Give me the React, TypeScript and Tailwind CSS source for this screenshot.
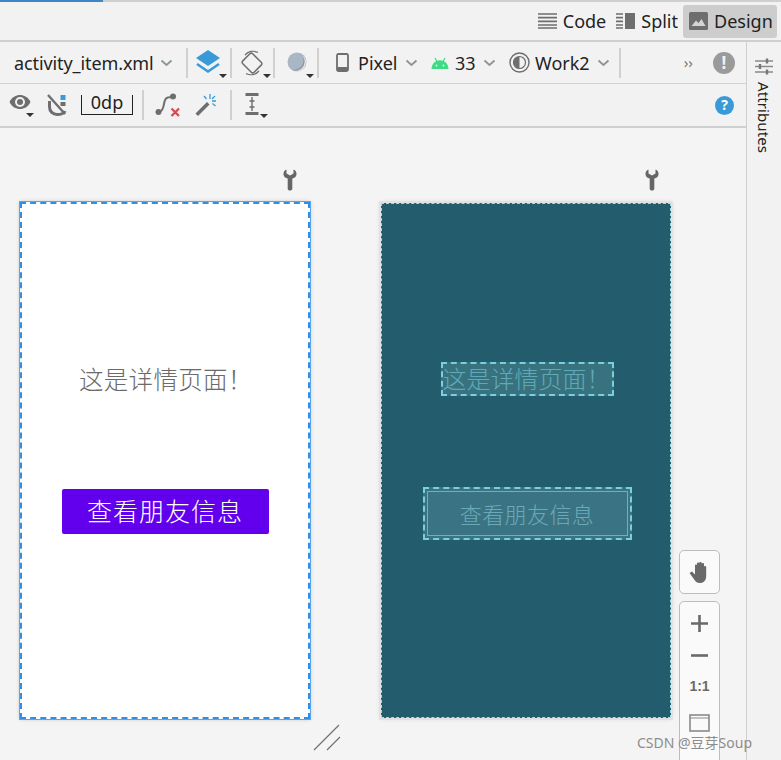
import React from "react";

const F = "[font-family:'Noto_Sans','Noto_Sans_CJK_SC',sans-serif]";

function Chevron() {
  return (
    <svg width="13" height="8" viewBox="0 0 13 8" className="shrink-0">
      <path d="M1.5 1.5 6.5 6 11.5 1.5" fill="none" stroke="#8c9499" strokeWidth="1.8" />
    </svg>
  );
}

function Corner() {
  return <span className="absolute right-0 bottom-0 h-0 w-0 border-x-[4px] border-t-[4px] border-x-transparent border-t-[#333]" />;
}

function Sep() {
  return <div className="h-[30px] w-[2px] shrink-0 bg-[#d0d0d0]" />;
}

function Wrench() {
  return (
    <svg width="14" height="22" viewBox="0 0 14 22">
      <path d="M3.5 0.5 C1.2 1.4 0.3 3.4 0.5 5.4 C0.8 7.6 2.4 9 4.7 9.6 L4.7 19.4 C4.7 20.8 5.7 21.6 7 21.6 C8.3 21.6 9.3 20.8 9.3 19.4 L9.3 9.6 C11.6 9 13.2 7.6 13.5 5.4 C13.7 3.4 12.8 1.4 10.5 0.5 L10.5 4.6 L7 6.4 L3.5 4.6 Z" fill="#666" />
    </svg>
  );
}

function TabIcon({ kind }: { kind: "code" | "split" | "design" }) {
  if (kind === "code")
    return (
      <svg width="19" height="16" viewBox="0 0 19 16">
        <path d="M0 1h19M0 4.7h19M0 8.3h19M0 12h19M0 15h19" stroke="#6e6e6e" strokeWidth="1.7" />
      </svg>
    );
  if (kind === "split")
    return (
      <svg width="19" height="16" viewBox="0 0 19 16">
        <path d="M0 1h7M0 4.7h7M0 8.3h7M0 12h7M0 15h7" stroke="#6e6e6e" strokeWidth="1.7" />
        <rect x="9" y="0" width="10" height="16" fill="#6e6e6e" />
      </svg>
    );
  return (
    <svg width="19" height="18" viewBox="0 0 19 18">
      <rect width="19" height="18" rx="1.5" fill="#6e6e6e" />
      <path d="M2.5 14 7 8.5 9.5 11 12.5 7 16.5 14Z" fill="#d4d4d4" />
    </svg>
  );
}

export default function App() {
  return (
    <div className={`relative flex h-[760px] w-[781px] flex-col overflow-hidden bg-[#f2f2f2] text-[#222] ${F}`}>
      {/* progress */}
      <div className="h-[2px] shrink-0 bg-[#cfcfcf]">
        <div className="h-full w-[103px] bg-[#3d86c6]" />
      </div>

      {/* Code / Split / Design */}
      <div className="flex h-[38px] shrink-0 items-center justify-end pr-[4px] text-[18px] leading-none">
        <div className="flex items-center gap-[6px] pr-[10px]">
          <TabIcon kind="code" />
          <span>Code</span>
        </div>
        <div className="flex items-center gap-[6px] pr-[5px]">
          <TabIcon kind="split" />
          <span>Split</span>
        </div>
        <div className="flex h-[33px] w-[94px] items-center gap-[6px] rounded-[3px] bg-[#cdcdcd] pl-[6px]">
          <TabIcon kind="design" />
          <span>Design</span>
        </div>
      </div>
      <div className="h-[2px] shrink-0 bg-[#cfcfcf]" />

      <div className="flex min-h-0 flex-1">
        <div className="flex min-w-0 flex-1 flex-col">
          {/* Toolbar 1 */}
          <div className="flex h-[42px] shrink-0 items-center border-b border-[#d2d2d2] text-[18px] leading-none">
            <div className="flex w-[186px] shrink-0 items-center pl-[14px]">
              <span className="mr-[6px] tracking-[-0.1px]">activity_item.xml</span>
              <Chevron />
            </div>
            <Sep />
            <div className="relative h-[30px] w-[42px] shrink-0">
              <svg width="28" height="26" viewBox="0 0 28 26" className="absolute left-[6px] top-[1px]">
                <path d="M14 1 26 9 14 17 2 9Z" fill="#389bd8" />
                <path d="M3 15 14 22.5 25 15" fill="none" stroke="#389bd8" strokeWidth="2.5" />
              </svg>
              <span className="absolute bottom-[0px] right-[3px] h-0 w-0 border-x-[4px] border-t-[4px] border-x-transparent border-t-[#333]" />
            </div>
            <Sep />
            <div className="relative h-[30px] w-[41px] shrink-0">
              <svg width="26" height="28" viewBox="0 0 26 28" className="absolute left-[7px] top-[1px]">
                <rect x="6" y="6" width="14" height="16" rx="2" transform="rotate(-45 13 14)" fill="none" stroke="#6e6e6e" strokeWidth="1.5" />
                <path d="M6 6A10.5 10.5 0 0 1 19 3.5M20 22A10.5 10.5 0 0 1 7 24.5" fill="none" stroke="#6e6e6e" strokeWidth="1.2" />
              </svg>
              <span className="absolute bottom-[0px] right-[2px] h-0 w-0 border-x-[4px] border-t-[4px] border-x-transparent border-t-[#333]" />
            </div>
            <Sep />
            <div className="relative h-[30px] w-[42px] shrink-0">
              <svg width="20" height="20" viewBox="0 0 20 20" className="absolute left-[12px] top-[4px]">
                <circle cx="10" cy="10" r="9.5" fill="#a9b6c4" />
                <path d="M13 1A9.5 9.5 0 0 1 3 17 9 9 0 0 0 13 1Z" fill="#8a8f94" />
                <path d="M14 2A9.2 9.2 0 0 1 5 18.5 9.5 9.5 0 0 0 14 2Z" fill="#e8e8e8" />
              </svg>
              <span className="absolute bottom-[0px] right-[3px] h-0 w-0 border-x-[4px] border-t-[4px] border-x-transparent border-t-[#333]" />
            </div>
            <Sep />
            <div className="flex w-[112px] shrink-0 items-center pl-[17px]">
              <svg width="13" height="19" viewBox="0 0 13 19" className="mr-[9px]">
                <rect x="1" y="1" width="11" height="17" rx="1.5" fill="none" stroke="#6e6e6e" strokeWidth="1.8" />
                <rect x="1" y="14" width="11" height="4" fill="#6e6e6e" />
              </svg>
              <span className="mr-[7px]">Pixel</span>
              <Chevron />
            </div>
            <div className="flex w-[78px] shrink-0 items-center">
              <svg width="18" height="12" viewBox="0 0 18 12" className="mr-[6px]">
                <path d="M0.5 12C0.8 7 4 3.2 9 3.2S17.2 7 17.5 12Z" fill="#3ddc84" />
                <path d="M4 1 6 4.5M14 1 12 4.5" stroke="#3ddc84" strokeWidth="1.2" />
                <circle cx="5.5" cy="8.5" r="0.9" fill="#f2f2f2" />
                <circle cx="12.5" cy="8.5" r="0.9" fill="#f2f2f2" />
              </svg>
              <span className="mr-[7px]">33</span>
              <Chevron />
            </div>
            <div className="flex w-[110px] shrink-0 items-center">
              <svg width="21" height="21" viewBox="0 0 21 21" className="mr-[5px]">
                <circle cx="10.5" cy="10.5" r="9.5" fill="none" stroke="#6e6e6e" strokeWidth="1.4" />
                <circle cx="10.5" cy="10.5" r="6" fill="none" stroke="#6e6e6e" strokeWidth="1.2" />
                <path d="M10.5 4.5A6 6 0 0 0 10.5 16.5Z" fill="#6e6e6e" />
              </svg>
              <span className="mr-[7px]">Work2</span>
              <Chevron />
            </div>
            <Sep />
            <div className="flex flex-1 items-center justify-end pr-[11px]">
              <span className="mr-[20px] text-[15px] leading-none text-[#777]">››</span>
              <span className="flex h-[22px] w-[22px] items-center justify-center rounded-full bg-[#9a9a9a] text-[17px] font-bold leading-none text-[#f2f2f2]">!</span>
            </div>
          </div>

          {/* Toolbar 2 */}
          <div className="flex h-[44px] shrink-0 items-center border-b-2 border-[#cfcfcf]">
            <div className="relative ml-[9px] h-[24px] w-[25px] shrink-0">
              <svg width="22" height="16" viewBox="0 0 22 16" className="absolute left-0 top-[1px]">
                <path d="M0.5 8C3 3 7 1 11 1S19 3 21.5 8C19 13 15 15 11 15S3 13 0.5 8Z" fill="#6e6e6e" />
                <circle cx="11" cy="8" r="5" fill="#f2f2f2" />
                <circle cx="11" cy="8" r="3" fill="#6e6e6e" />
              </svg>
              <span className="absolute bottom-0 right-0 h-0 w-0 border-x-[4px] border-t-[4px] border-x-transparent border-t-[#333]" />
            </div>
            <svg width="22" height="22" viewBox="0 0 22 22" className="ml-[12px] shrink-0">
              <path d="M2 1 19 20" stroke="#6e6e6e" strokeWidth="2.4" />
              <path d="M3.5 7V13C3.5 17.5 7 20.5 11 20.5S18 19.5 19 17M14 20" fill="none" stroke="#6e6e6e" strokeWidth="3" />
              <rect x="14.5" y="1" width="5" height="5" fill="#389bd8" />
              <rect x="14.5" y="8" width="5" height="4" fill="#6e6e6e" />
            </svg>
            <div className="ml-[13px] flex h-[20px] w-[52px] shrink-0 items-end justify-center border-x border-b border-[#222] text-[18px] leading-[22px]">
              <span className="relative top-[-1px]">0dp</span>
            </div>
            <div className="ml-[9px] shrink-0"><div className="h-[30px] w-[2px] bg-[#d0d0d0]" /></div>
            <svg width="26" height="24" viewBox="0 0 26 24" className="ml-[11px] shrink-0">
              <circle cx="3.5" cy="19" r="3" fill="#6e6e6e" />
              <circle cx="18" cy="3.5" r="3" fill="#6e6e6e" />
              <path d="M5 18.5C10 17 8 8 11 5.5C12.5 4 15 4 17 4" fill="none" stroke="#6e6e6e" strokeWidth="2" />
              <path d="M16.5 15.5 24 23M24 15.5 16.5 23" stroke="#d9474f" strokeWidth="2.2" />
            </svg>
            <svg width="24" height="24" viewBox="0 0 24 24" className="ml-[13px] shrink-0">
              <path d="M1.5 20.5 13 9l2.5 2.5L4 23Z" fill="#6e6e6e" />
              <path d="M16 1v5M22 8h-4M10 3l2.5 3M21.5 13l-3-2.5M21 3l-3 3" stroke="#389bd8" strokeWidth="1.3" />
            </svg>
            <div className="ml-[12px] h-[30px] w-[2px] shrink-0 bg-[#d0d0d0]" />
            <div className="relative ml-[13px] h-[25px] w-[25px] shrink-0">
              <svg width="14" height="22" viewBox="0 0 14 22" className="absolute left-0 top-0">
                <path d="M0.5 1.5h13M0.5 20.5h13" stroke="#6e6e6e" strokeWidth="3" />
                <path d="M7 4v14M4.5 8h5M4.5 14h5" stroke="#6e6e6e" strokeWidth="1.4" />
              </svg>
              <span className="absolute bottom-0 left-[15px] h-0 w-0 border-x-[4px] border-t-[4px] border-x-transparent border-t-[#333]" />
            </div>
            <div className="flex flex-1 justify-end pr-[12px]">
              <span className="flex h-[19px] w-[19px] items-center justify-center rounded-full bg-[#389bd8] text-[14px] font-bold leading-none text-white">?</span>
            </div>
          </div>

          {/* Canvas */}
          <div className="relative min-h-0 flex-1 bg-[#f4f4f4]">
            <div className="flex pl-[20px] pt-[41px]">
              <div className="flex w-[290px] flex-col items-end pr-[13px]">
                <Wrench />
              </div>
              <div className="ml-[71px] flex w-[290px] flex-col items-end pr-[12px]">
                <Wrench />
              </div>
            </div>
            <div className="mt-[11px] flex items-start pl-[20px]">
              {/* design phone */}
              <div className="flex h-[517px] w-[290px] flex-col items-center border-2 border-dashed border-[#2f8ee8] bg-white shadow-[0_0_4px_rgba(0,0,0,0.25)] outline outline-1 outline-[#5aa6ec]">
                <div className="mt-[161px] w-full pl-[57px] text-[24.5px] font-light leading-[30px] tracking-[0.3px] text-[#6a6a6a]">这是详情页面！</div>
                <div className="mt-[94px] flex h-[45px] w-[207px] items-center justify-center rounded-[2px] bg-[#6200ee] text-[25px] font-light leading-none tracking-[1px] text-white">查看朋友信息</div>
              </div>
              {/* blueprint phone */}
              <div className="ml-[71px] mt-[1px] flex h-[515px] w-[290px] flex-col items-center border border-dashed border-[#a9d9e2] bg-[#225c6d] shadow-[0_0_0_2px_#e2e2e2,0_0_5px_rgba(0,0,0,0.2)]">
                <div className="mt-[158px] ml-[2px] flex h-[34px] w-[173px] items-center border-2 border-dashed border-[#79cfdf] bg-[#38727f] text-[24px] font-light leading-none text-[#5fa9b8]">
                  <span>这是详情页面！</span>
                </div>
                <div className="mt-[91px] ml-[2px] flex h-[53px] w-[209px] items-center justify-center border-2 border-dashed border-[#79cfdf] bg-[#3a7484] p-[2px]">
                  <div className="flex h-full w-full items-center justify-center border border-[#5fb6c8] text-[22px] font-light leading-none tracking-[0.4px] text-[#6ba9b8]">查看朋友信息</div>
                </div>
              </div>
            </div>
            <svg width="30" height="28" viewBox="0 0 30 28" className="absolute left-[313px] top-[596px]">
              <path d="M1 26 26 1M14 26 27 13" stroke="#707070" strokeWidth="1.2" />
            </svg>
            {/* zoom controls */}
            <div className="absolute left-[679px] top-[422px] flex h-[44px] w-[41px] items-center justify-center rounded-[5px] border border-[#bdbdbd] bg-[#fafafa]">
              <svg width="22" height="24" viewBox="0 0 22 24">
                <path d="M0.5 13 3 11.5 6 14.5V5.5C6 4.3 8 4.3 8 5.5V3.5C8 2.3 10.2 2.3 10.2 3.5V3C10.2 1.8 12.6 1.8 12.6 3V4C12.6 2.8 15 2.8 15 4V7C15 5.8 17.2 5.8 17.2 7V16C17.2 20.5 14.5 23 11 23C7.5 23 6 21 4.5 18.5Z" fill="#6a6a6a" />
              </svg>
            </div>
            <div className="absolute left-[679px] top-[473px] flex h-[180px] w-[41px] flex-col items-center rounded-[5px] border border-[#bdbdbd] bg-[#fafafa] pt-[13px]">
              <svg width="17" height="17" viewBox="0 0 17 17">
                <path d="M8.5 0v17M0 8.500h17" stroke="#6a6a6a" strokeWidth="2.6" />
              </svg>
              <svg width="17" height="3" viewBox="0 0 17 3" className="mt-[22px]">
                <path d="M0 1.500h17" stroke="#6a6a6a" strokeWidth="2.6" />
              </svg>
              <span className="mt-[22px] text-[14px] font-bold leading-none text-[#6a6a6a] [font-family:'Liberation_Sans',sans-serif]">1:1</span>
              <svg width="21" height="18" viewBox="0 0 21 18" className="mt-[21px]">
                <rect x="1" y="1" width="19" height="16" fill="none" stroke="#8a8a8a" strokeWidth="1.6" />
                <path d="M1 4h19" stroke="#8a8a8a" strokeWidth="1" />
              </svg>
            </div>
          </div>
        </div>

        {/* Right rail */}
        <div className="flex w-[35px] shrink-0 flex-col items-center border-l border-[#cfcfcf] pt-[16px]">
          <svg width="18" height="17" viewBox="0 0 18 17">
            <path d="M0 3h18M0 8.500h18M0 14h18" stroke="#8a8a8a" strokeWidth="1.3" />
            <path d="M12 0.500v5M5 6v5M12 11.500v5" stroke="#777" strokeWidth="2.4" />
          </svg>
          <span className="mt-[7px] text-[15px] leading-[18px] tracking-[0.1px] [writing-mode:vertical-rl]">Attributes</span>
        </div>
      </div>

      <span className="absolute left-[637px] top-[733px] text-[14px] leading-[20px] text-[#8d8d8d]">CSDN @豆芽Soup</span>
    </div>
  );
}
